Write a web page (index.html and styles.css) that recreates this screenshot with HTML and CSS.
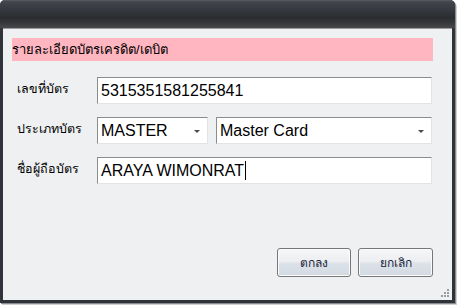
FILE: index.html
```html
<!DOCTYPE html>
<html lang="th">
<head>
    <meta charset="UTF-8">
    <title>รายละเอียดบัตรเครดิต/เดบิต</title>
    <link rel="stylesheet" href="styles.css">
</head>
<body>
<div class="window">
    <div class="titlebar"></div>
    <div class="client">
        <p class="caption">รายละเอียดบัตรเครดิต/เดบิต</p>
        <div class="form">
            <label class="lbl">เลขที่บัตร</label>
            <div class="field">5315351581255841</div>

            <label class="lbl">ประเภทบัตร</label>
            <div class="combos">
                <div class="field combo combo-type">MASTER<span class="arrow"></span></div>
                <div class="field combo combo-name">Master Card<span class="arrow"></span></div>
            </div>

            <label class="lbl">ชื่อผู้ถือบัตร</label>
            <div class="field">ARAYA WIMONRAT<span class="caret"></span></div>
        </div>
        <div class="buttons">
            <button class="btn">ตกลง</button>
            <button class="btn">ยกเลิก</button>
        </div>
        <span class="grip"></span>
    </div>
</div>
</body>
</html>
```

FILE: styles.css
```css
/* reset */
body,div,p,label,button{margin:0;padding:0}
html,body{width:100%;height:100%}
body{background:#fff;font-family:Tahoma,'Liberation Sans','Noto Sans',sans-serif;font-size:12px;color:#000}
button{border:0 none;background-color:transparent;cursor:pointer;font-family:inherit}
/* //reset */

.window{
    width:455px;
    height:303px;
    background:#30333a;
    border-radius:5px 5px 0 0;
    box-shadow:1px 1px 0 #8a8b8e, 2px 2px 0 #d0d0d2;
    overflow:hidden;
}
.titlebar{
    height:28px;
    background:linear-gradient(#5a5d66 0, #41444c 2px, #35383e 10px, #2a2c2f 18px, #3a3b3e 24px, #4a4a4c 28px);
}
.client{
    position:relative;
    margin:0 3px;
    height:272px;
    background:#eff0f2;
    box-shadow:inset 0 1px 0 #9a9ca0;
    overflow:hidden;
}
.caption{
    margin:10px 0 0 9px;
    width:421px;
    height:23px;
    line-height:23px;
    background:#ffb6c1;
    font-size:13px;
    color:#000;
}
.form{
    display:grid;
    grid-template-columns:80px 335px;
    row-gap:13px;
    margin:16px 0 0 14px;
    align-items:center;
}
.lbl{
    font-size:12.5px;
    color:#000;
    padding-bottom:3px;
}
.field{
    position:relative;
    box-sizing:border-box;
    height:27px;
    line-height:25px;
    padding-left:3px;
    background:#fff;
    border:1px solid #e3e3e3;
    border-top-color:#8c8c8c;
    border-left-color:#8c8c8c;
    font-family:'Liberation Sans',Arial,sans-serif;
    font-size:16px;
    color:#000;
}
.combos{
    display:flex;
    gap:8px;
}
.combo-type{width:111px}
.combo-name{width:216px}
.arrow{
    position:absolute;
    right:7px;
    top:12px;
    border-left:3px solid transparent;
    border-right:3px solid transparent;
    border-top:3px solid #4a4a4a;
}
.caret{
    display:inline-block;
    width:1px;
    height:19px;
    margin-left:1px;
    vertical-align:-4px;
    background:#000;
}
.buttons{
    display:flex;
    justify-content:flex-end;
    gap:7px;
    margin:64px 19px 0 0;
}
.btn{
    box-sizing:border-box;
    width:74px;
    height:29px;
    border:1px solid #767779;
    border-radius:3px;
    background:linear-gradient(#f6f7f8 0, #eceef0 45%, #dbe1e8 55%, #d3dae2 100%);
    box-shadow:inset 0 0 0 1px #fbfbfc;
    font-size:12px;
    color:#1b1f3a;
}
.btn + .btn{width:75px}
.grip{
    position:absolute;
    right:2px;
    bottom:2px;
    width:9px;
    height:9px;
    background:
        linear-gradient(#9a9ca0,#9a9ca0) 6px 0/2px 2px,
        linear-gradient(#9a9ca0,#9a9ca0) 3px 3px/2px 2px,
        linear-gradient(#9a9ca0,#9a9ca0) 6px 3px/2px 2px,
        linear-gradient(#9a9ca0,#9a9ca0) 0 6px/2px 2px,
        linear-gradient(#9a9ca0,#9a9ca0) 3px 6px/2px 2px,
        linear-gradient(#9a9ca0,#9a9ca0) 6px 6px/2px 2px;
    background-repeat:no-repeat;
}
```
